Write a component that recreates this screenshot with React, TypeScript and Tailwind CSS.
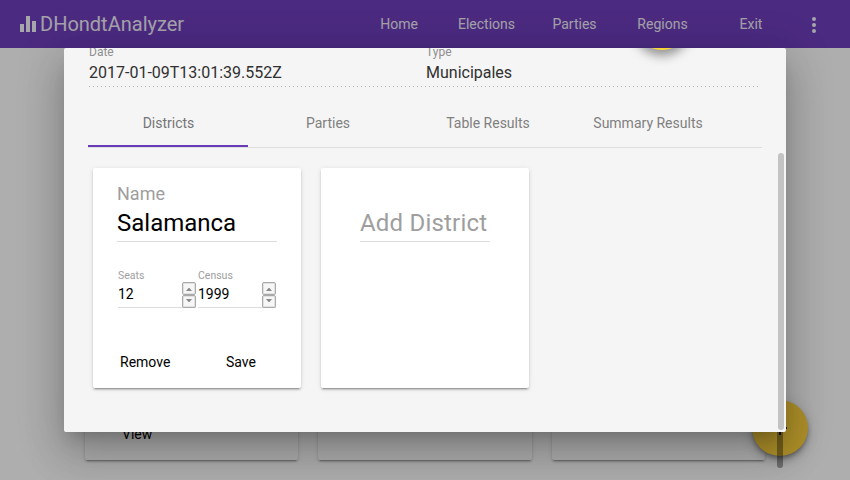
import React from "react";

const tabs = ["Districts", "Parties", "Table Results", "Summary Results"];

const nav: { label: string; width: string }[] = [
  { label: "Home", width: "w-[78px]" },
  { label: "Elections", width: "w-[97px]" },
  { label: "Parties", width: "w-[79px]" },
  { label: "Regions", width: "w-[97px]" },
  { label: "Exit", width: "w-[80px]" },
];

const cardShadow =
  "shadow-[0_2px_2px_0_rgba(0,0,0,0.14),0_1px_5px_0_rgba(0,0,0,0.12),0_3px_1px_-2px_rgba(0,0,0,0.2)]";

function Header() {
  return (
    <header className="flex h-12 items-center bg-[#6c3db9] text-white">
      <div className="flex flex-1 items-center pl-5">
        <span className="mr-[4px] flex h-4 w-4 items-end justify-between">
          <i className="h-2 w-1 bg-[#f0eef5]" />
          <i className="h-4 w-1 bg-[#f0eef5]" />
          <i className="h-[11px] w-1 bg-[#f0eef5]" />
        </span>
        <span className="text-[20px] leading-6 text-[#ece8f4]">DHondtAnalyzer</span>
      </div>
      <nav className="flex text-sm text-[#ece8f4]">
        {nav.map((n) => (
          <span key={n.label} className={`${n.width} text-center`}>
            {n.label}
          </span>
        ))}
      </nav>
      <div className="ml-[21px] mr-[34px] mt-[2px] flex w-1 flex-col gap-[2px]">
        <i className="h-1 w-1 rounded-full bg-[#f0eef5]" />
        <i className="h-1 w-1 rounded-full bg-[#f0eef5]" />
        <i className="h-1 w-1 rounded-full bg-[#f0eef5]" />
      </div>
    </header>
  );
}

function Spinner() {
  return (
    <span className="flex h-[26px] w-[14px] shrink-0 flex-col">
      <span className="flex h-[13px] items-center justify-center rounded-[2px] border border-[#a9a9a9] bg-[#f6f6f6] pt-px shadow-[inset_0_0_0_1px_#e2e2e2]">
        <svg width="6" height="3" viewBox="0 0 6 3">
          <path d="M0 3L2.5 0h1L6 3z" fill="#8a8a8a" />
        </svg>
      </span>
      <span className="flex h-[13px] items-start justify-center rounded-[2px] border border-[#a9a9a9] bg-[#f6f6f6] pt-[3px] shadow-[inset_0_0_0_1px_#e2e2e2]">
        <svg width="6" height="3" viewBox="0 0 6 3">
          <path d="M0 0h6L3.5 3h-1z" fill="#8a8a8a" />
        </svg>
      </span>
    </span>
  );
}

function NumberField({ label, value, width }: { label: string; value: string; width: string }) {
  return (
    <div className={`${width} border-b border-[#dcdcdc]`}>
      <div className="h-3 pt-px text-[10.5px] leading-3 text-[#9e9e9e]">{label}</div>
      <div className="flex h-[26px] items-center justify-between">
        <span className="text-sm leading-5">{value}</span>
        <span className="-mb-[2px]">
          <Spinner />
        </span>
      </div>
    </div>
  );
}

function Dialog() {
  return (
    <section className="absolute left-[64px] top-12 h-[384px] w-[722px] rounded-[2px] bg-[#f5f5f5] shadow-[0_24px_38px_3px_rgba(0,0,0,0.14),0_9px_46px_8px_rgba(0,0,0,0.12),0_11px_15px_-7px_rgba(0,0,0,0.2)]">
      <div className="relative h-full overflow-hidden rounded-[2px]">
        <div className="absolute -top-[54px] left-[570px] h-14 w-14 rounded-full bg-[#fdd835] shadow-[0_6px_10px_0_rgba(0,0,0,0.3),0_1px_18px_0_rgba(0,0,0,0.2)]" />
        <div className="relative ml-[25px] flex h-[39px] w-[672px] text-[#303030]">
          <div className="-mt-1 w-[337px]">
            <div className="text-xs leading-4 text-[#8e8e8e]">Date</div>
            <div className="pt-px text-base leading-6">2017-01-09T13:01:39.552Z</div>
          </div>
          <div className="-mt-1">
            <div className="text-xs leading-4 text-[#8e8e8e]">Type</div>
            <div className="pt-px text-base leading-6">Municipales</div>
          </div>
        </div>
        <div className="-mt-px ml-[25px] h-px w-[671px] bg-[repeating-linear-gradient(90deg,#b0b0b0_0_1px,transparent_1px_4px)]" />
        <div className="ml-6 mt-[12px] flex h-[49px] w-[674px] border-b border-[#dedede]">
          {tabs.map((t, i) => (
            <div
              key={t}
              className={
                i === 0
                  ? "h-12 w-40 border-b-2 border-[#673ab7] pl-px pt-[14px] text-center text-sm leading-5 text-[#757575]"
                  : "h-12 w-40 pt-[14px] text-center text-sm leading-5 text-[#808080]"
              }
            >
              {t}
            </div>
          ))}
        </div>
        <div className="ml-[29px] mt-[20px] flex gap-5">
          <article className={`h-[220px] w-[208px] rounded-[2px] bg-white px-6 pt-[14px] text-black ${cardShadow}`}>
            <div className="text-[18px] leading-6 text-[#9e9e9e]">Name</div>
            <div className="h-[36px] w-40 border-b border-[#dcdcdc] pt-[3px] text-2xl leading-7">Salamanca</div>
            <div className="ml-[1px] mt-[27px] flex gap-[2px]">
              <NumberField label="Seats" value="12" width="w-[78px]" />
              <NumberField label="Census" value="1999" width="w-[78px]" />
            </div>
            <div className="mt-[44px] flex text-sm leading-5">
              <span className="ml-[3px] w-[106px]">Remove</span>
              <span>Save</span>
            </div>
          </article>
          <article className={`h-[220px] w-[208px] rounded-[2px] bg-white pl-[39px] pt-[38px] ${cardShadow}`}>
            <div className="h-[36px] w-[130px] whitespace-nowrap border-b border-[#dcdcdc] pt-[3px] text-2xl leading-7 tracking-[0.2px] text-[#9e9e9e]">
              Add District
            </div>
          </article>
        </div>
        <div className="absolute left-[714px] top-[105px] h-[277px] w-[6px] rounded-full bg-[#c3c3c3]" />
      </div>
    </section>
  );
}

export default function App() {
  return (
    <div className="relative h-[480px] w-[850px] overflow-hidden bg-[#fafafa] font-['Roboto',sans-serif]">
      <Header />
      <main className="flex h-[412px] gap-5 px-[85px] pt-[52px]">
        {[0, 1, 2].map((i) => (
          <article
            key={i}
            className={`flex flex-1 flex-col justify-end rounded-[2px] bg-[#fafafa] pb-4 pl-[37px] text-sm leading-5 ${cardShadow}`}
          >
            {i === 0 && "View"}
          </article>
        ))}
      </main>
      <div className="absolute left-[752px] top-[400px] flex h-14 w-14 items-center justify-center rounded-full bg-[#f9cf3c] shadow-[0_6px_10px_0_rgba(0,0,0,0.14),0_1px_18px_0_rgba(0,0,0,0.12),0_3px_5px_-1px_rgba(0,0,0,0.4)]">
        <svg width="24" height="24" viewBox="0 0 24 24">
          <path d="M19 13h-6v6h-2v-6H5v-2h14v2z" fill="#212121" />
        </svg>
      </div>
      <div className="absolute left-[777px] top-[52px] h-[416px] w-[6px] rounded-full bg-black/35" />
      <div className="absolute inset-0 bg-black/30" />
      <Dialog />
    </div>
  );
}
